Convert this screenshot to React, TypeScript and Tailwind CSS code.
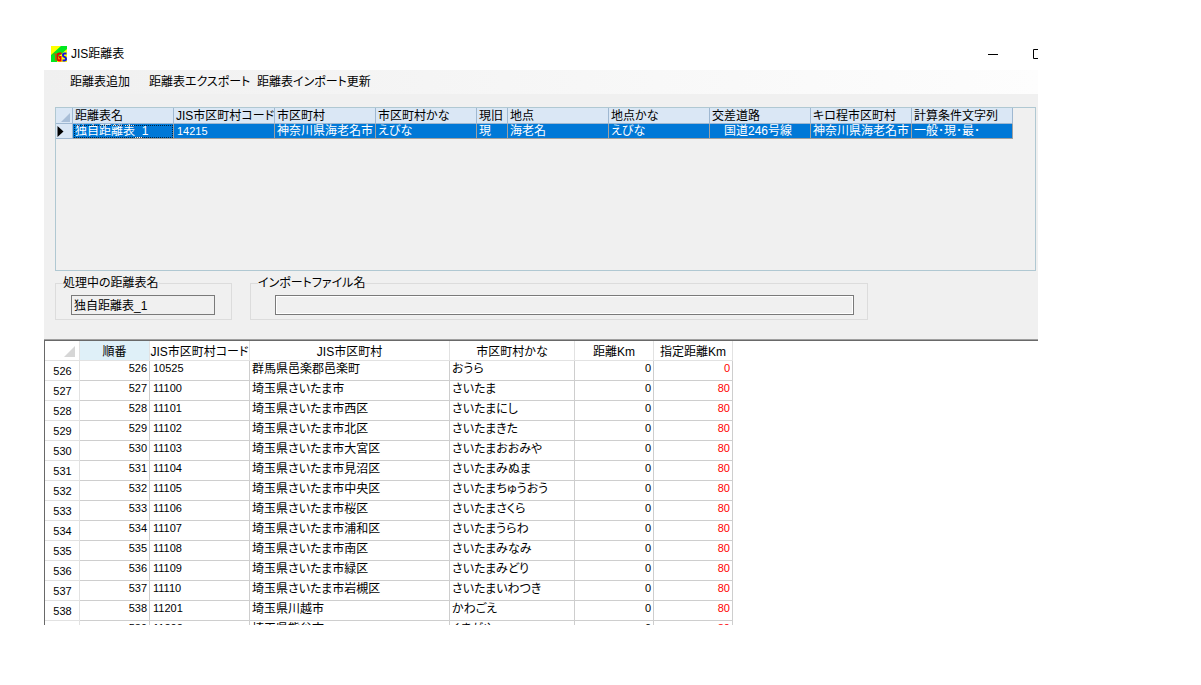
import React from "react";

const points: [number, string, string, string, number][] = [
  [526, "10525", "群馬県邑楽郡邑楽町", "おうら", 0],
  [527, "11100", "埼玉県さいたま市", "さいたま", 80],
  [528, "11101", "埼玉県さいたま市西区", "さいたまにし", 80],
  [529, "11102", "埼玉県さいたま市北区", "さいたまきた", 80],
  [530, "11103", "埼玉県さいたま市大宮区", "さいたまおおみや", 80],
  [531, "11104", "埼玉県さいたま市見沼区", "さいたまみぬま", 80],
  [532, "11105", "埼玉県さいたま市中央区", "さいたまちゅうおう", 80],
  [533, "11106", "埼玉県さいたま市桜区", "さいたまさくら", 80],
  [534, "11107", "埼玉県さいたま市浦和区", "さいたまうらわ", 80],
  [535, "11108", "埼玉県さいたま市南区", "さいたまみなみ", 80],
  [536, "11109", "埼玉県さいたま市緑区", "さいたまみどり", 80],
  [537, "11110", "埼玉県さいたま市岩槻区", "さいたまいわつき", 80],
  [538, "11201", "埼玉県川越市", "かわごえ", 80],
  [539, "11202", "埼玉県熊谷市", "くまがや", 80],
];

const tableColumns: [string, string][] = [
  ["距離表名", "独自距離表_1"],
  ["JIS市区町村コード", "14215"],
  ["市区町村", "神奈川県海老名市"],
  ["市区町村かな", "えびな"],
  ["現旧", "現"],
  ["地点", "海老名"],
  ["地点かな", "えびな"],
  ["交差道路", "　国道246号線"],
  ["キロ程市区町村", "神奈川県海老名市"],
  ["計算条件文字列", "一般･現･最･"],
];

function AppIcon() {
  return (
    <svg width="16" height="16" viewBox="0 0 16 16" aria-hidden="true">
      <rect width="16" height="16" fill="#ffff00" />
      <path d="M10 0H16V3L6 12V16H0V9Z" fill="#00e820" />
      <g fill="none">
        <path d="M2.500 8H6M4.500 8V15" stroke="#c06000" />
        <path d="M10.500 7.500H8.500Q6.500 7.500 6.500 9.500V12.500Q6.500 14.500 8 14.500H9.500V11H8" stroke="#f00000" strokeWidth="2" />
        <path d="M15.500 7.500H13.300Q12 7.500 12 9.200T13.500 11T15 12.800T13.500 14.500H11.500" stroke="#1010e0" strokeWidth="2" />
      </g>
    </svg>
  );
}

function TitleBar() {
  return (
    <header className="flex h-7 items-center overflow-hidden pb-1 pl-[7px]">
      <AppIcon />
      <h1 className="ml-1 flex-1 text-xs leading-4">JIS距離表</h1>
      <div className="flex w-[51px] shrink-0">
        <button aria-label="最小化" className="w-[46px] shrink-0">
          <svg width="11" height="11" viewBox="0 0 11 11">
            <path d="M1 5.500H11" stroke="#000" />
          </svg>
        </button>
        <button aria-label="最大化" className="w-[46px] shrink-0">
          <svg width="10" height="10" viewBox="0 0 10 10">
            <path d="M0.500 0.500H9.500V9.500H0.500Z" fill="none" stroke="#000" />
          </svg>
        </button>
      </div>
    </header>
  );
}

function Menu() {
  return (
    <nav className="flex h-6 items-center bg-linear-to-r from-[#f0f0f0] to-[#fdfdfd] pl-[26px] text-xs leading-4 whitespace-nowrap">
      <button className="w-[79px] text-left">距離表追加</button>
      <button className="w-[108px] text-left">距離表エクスポート</button>
      <button>距離表インポート更新</button>
    </nav>
  );
}

function DistanceTables() {
  return (
    <section className="mr-[2px] ml-[11px] h-[164px] overflow-hidden border border-[#b0c8d2]">
      <table className="w-[957px] table-fixed border-separate border-spacing-0 text-xs leading-[14px] whitespace-nowrap">
        <colgroup>
          <col className="w-[17px]" />
          {tableColumns.map(([name]) => (
            <col key={name} className={name === "現旧" ? "w-[31px]" : "w-[101px]"} />
          ))}
        </colgroup>
        <thead>
          <tr className="h-4 bg-[#dae7f5]">
            <td className="border-r border-b border-[#9fb8d1] p-0">
              <svg className="ml-auto block" width="11" height="14" viewBox="0 0 11 14" aria-hidden="true">
                <path d="M9 4V13H0Z" fill="#a9bfd8" />
              </svg>
            </td>
            {tableColumns.map(([name]) => (
              <th key={name} scope="col" className="border-r border-b border-[#9fb8d1] p-0 pl-0.5 text-left font-normal">
                {name}
              </th>
            ))}
          </tr>
        </thead>
        <tbody>
          <tr className="h-[15px] bg-[#0078d7] text-white">
            <td className="border-r border-b border-[#9fb8d1] bg-[#dae7f5] p-0">
              <svg className="ml-px block" width="7" height="11" viewBox="0 0 7 11" aria-hidden="true">
                <path d="M0.500 0L6.500 5.500L0.500 11Z" fill="#000" />
              </svg>
            </td>
            {tableColumns.map(([name, value], i) => (
              <td
                key={name}
                className={
                  i === 0
                    ? "border-r border-b border-[#a0a0a0] p-0 pl-0.5 outline-1 -outline-offset-2 outline-dotted outline-black/70"
                    : i === 1
                      ? "border-r border-b border-[#a0a0a0] p-0 pl-[3px] text-[11px]"
                      : "border-r border-b border-[#a0a0a0] p-0 pl-0.5"
                }
              >
                {value}
              </td>
            ))}
          </tr>
        </tbody>
      </table>
    </section>
  );
}

function Groups() {
  return (
    <div className="flex gap-[18px] pt-1 pr-[170px] pb-5 pl-[11px] text-xs leading-4">
      <fieldset className="w-[177px] shrink-0 border border-[#dcdcdc] px-[15px] pt-1 pb-1">
        <legend className="-ml-2">
          <label htmlFor="current-table">処理中の距離表名</label>
        </legend>
        <input
          id="current-table"
          readOnly
          defaultValue="独自距離表_1"
          className="block h-5 w-full max-w-[144px] border border-[#7a7a7a] bg-[#f0f0f0] px-0.5 pb-0.5"
        />
      </fieldset>
      <fieldset className="min-w-0 flex-1 border border-[#dcdcdc] pt-1 pr-[13px] pb-1 pl-6">
        <legend className="-ml-[17px]">
          <label htmlFor="import-file">インポートファイル名</label>
        </legend>
        <input
          id="import-file"
          readOnly
          className="block h-5 w-full border border-[#7a7a7a] bg-[#f0f0f0] px-0.5 pb-0.5 inset-ring inset-ring-white"
        />
      </fieldset>
    </div>
  );
}

const head = "border-r border-b border-[#e2e2e2] p-0 pt-[3px] font-normal";
const cell = "border-r border-b border-[#cecece] p-0 pb-[3px]";
const numeric = "border-r border-b border-[#cecece] p-0 pb-[5px] text-[11px] leading-[14px]";

function PointTable() {
  return (
    <section className="min-h-0 flex-1 overflow-hidden border-l border-[#696969]">
      <table className="w-[688px] table-fixed border-separate border-spacing-0 text-xs leading-4 whitespace-nowrap">
        <colgroup>
          <col className="w-[35px]" />
          <col className="w-[70px]" />
          <col className="w-[100px]" />
          <col className="w-[200px]" />
          <col className="w-[125px]" />
          <col className="w-[79px]" />
          <col className="w-[79px]" />
        </colgroup>
        <thead>
          <tr className="h-5">
            <td className="border-r border-b border-[#e2e2e2] p-0 pt-px">
              <svg className="mr-1 ml-auto block" width="11" height="11" viewBox="0 0 11 11" aria-hidden="true">
                <path d="M11 0V11H0Z" fill="#d6d6d6" />
              </svg>
            </td>
            <th scope="col" className="border-r border-b border-[#e2e2e2] bg-[#dff0f8] p-0 pt-[3px] font-normal">順番</th>
            <th scope="col" className={head}>JIS市区町村コード</th>
            <th scope="col" className={head}>JIS市区町村</th>
            <th scope="col" className={head}>市区町村かな</th>
            <th scope="col" className={head}>距離Km</th>
            <th scope="col" className={head}>指定距離Km</th>
          </tr>
        </thead>
        <tbody>
          {points.map(([no, code, name, kana, limit]) => (
            <tr key={no} className="h-5">
              <th scope="row" className="border-r border-b border-[#e2e2e2] p-0 pl-px text-[11px] font-normal">{no}</th>
              <td className={`${numeric} pr-0.5 text-right`}>{no}</td>
              <td className={`${numeric} pl-[3px]`}>{code}</td>
              <td className={`${cell} pl-0.5`}>{name}</td>
              <td className={`${cell} pl-0.5`}>{kana}</td>
              <td className={`${numeric} pr-0.5 text-right`}>0</td>
              <td className={`${numeric} pr-0.5 text-right text-[#ff0000]`}>{limit}</td>
            </tr>
          ))}
        </tbody>
      </table>
    </section>
  );
}

export default function App() {
  return (
    <div className="flex h-screen flex-col bg-white pt-[42px] pr-[163px] pb-[60px] pl-11 font-['Liberation_Sans','Noto_Sans_CJK_JP',sans-serif] text-black [font-feature-settings:'palt']" lang="ja">
      <TitleBar />
      <Menu />
      <main className="flex min-h-0 flex-1 flex-col">
        <div className="shrink-0 border-b border-[#696969] bg-[#f0f0f0] pt-[13px] shadow-[inset_0_-1px_0_#a0a0a0]">
          <DistanceTables />
          <Groups />
        </div>
        <PointTable />
      </main>
    </div>
  );
}
